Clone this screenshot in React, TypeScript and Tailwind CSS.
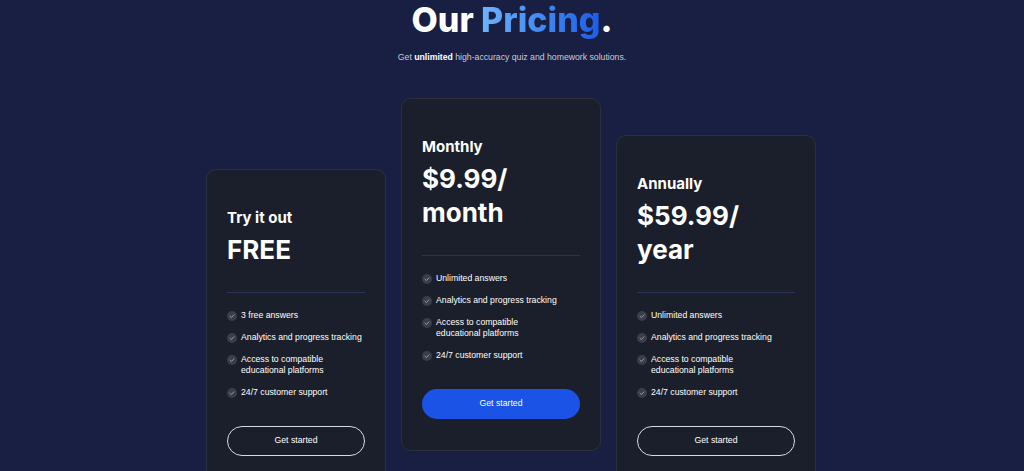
const plans = [
  {
    name: 'Try it out',
    price: ['FREE'],
    features: ['3 free answers', 'Analytics and progress tracking', 'Access to compatible educational platforms', '24/7 customer support'],
    featured: false,
  },
  {
    name: 'Monthly',
    price: ['$9.99/', 'month'],
    features: ['Unlimited answers', 'Analytics and progress tracking', 'Access to compatible educational platforms', '24/7 customer support'],
    featured: true,
  },
  {
    name: 'Annually',
    price: ['$59.99/', 'year'],
    features: ['Unlimited answers', 'Analytics and progress tracking', 'Access to compatible educational platforms', '24/7 customer support'],
    featured: false,
  },
];

function Check() {
  return (
    <svg width="10" height="10" viewBox="0 0 10 10" className="shrink-0">
      <circle cx="5" cy="5" r="5" fill="#3a3e4a" />
      <path d="M3 5.2 L4.4 6.5 L7 3.8" fill="none" stroke="#a3a7b1" strokeWidth="0.9" strokeLinecap="round" strokeLinejoin="round" />
    </svg>
  );
}

function PlanCard({ plan, index }: { plan: (typeof plans)[number]; index: number }) {
  const width = index === 0 ? 'w-[180px]' : 'w-[200px]';
  return (
    <div
      className={`${width} ${plan.featured ? 'mb-[37px]' : ''} flex flex-col rounded-[10px] border border-[#2b303c] bg-[#1b1f2b] px-5 pt-[38px] pb-[31px]`}
    >
      <h3 className="font-['Inter',sans-serif] text-[15px] leading-5 font-bold text-white">{plan.name}</h3>
      <p className="mt-[5px] font-['Inter',sans-serif] text-[26px] leading-[34px] font-bold text-white">
        {plan.price.map((line, i) => (
          <span key={i} className="block">
            {line}
          </span>
        ))}
      </p>
      <div className="mt-[25px] h-px bg-[#2a3454]" />
      <ul className="mt-[17px] flex flex-col gap-[11px]">
        {plan.features.map((f) => (
          <li key={f} className="flex items-start gap-[4px]">
            <span className="pt-px">
              <Check />
            </span>
            <span className={`text-[8.7px] leading-[11px] text-white ${f.startsWith('Access') ? 'max-w-[100px]' : 'whitespace-nowrap'}`}>
              {f}
            </span>
          </li>
        ))}
      </ul>
      <button
        className={`mt-[28px] h-[30px] w-full rounded-full text-[8.7px] font-medium text-white ${
          plan.featured ? 'bg-[#1a53e6]' : 'border border-[#d9dbe0]'
        }`}
      >
        Get started
      </button>
    </div>
  );
}

export default function App() {
  return (
    <main className="min-h-screen overflow-hidden bg-[#191f43] font-['Liberation_Sans',Arial,sans-serif]">
      <h1 className="text-center font-['Inter',sans-serif] text-[34px] leading-10 font-extrabold text-white">
        Our{' '}
        <span className="bg-gradient-to-r from-[#6cb4fb] to-[#1d5ae6] bg-clip-text text-transparent">Pricing</span>.
      </h1>
      <p className="mt-[11px] text-center text-[8.7px] leading-3 text-[#c9ccd6]">
        Get <span className="font-bold text-white">unlimited</span> high-accuracy quiz and homework solutions.
      </p>
      <section className="mt-[35px] flex items-end justify-center gap-[15px] pr-[2px]">
        {plans.map((plan, i) => (
          <PlanCard key={plan.name} plan={plan} index={i} />
        ))}
      </section>
    </main>
  );
}
